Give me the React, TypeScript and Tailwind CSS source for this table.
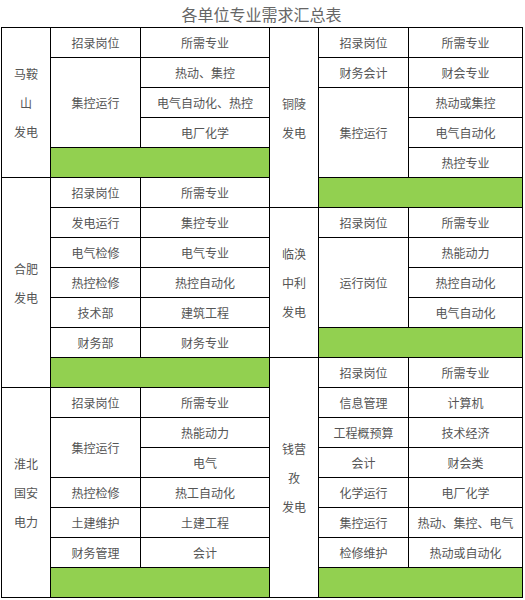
import React from 'react';

type Row = { a?: string; span?: number; b: string } | 'green';
type Block = { unit: string[]; rows: Row[] };

const H = { a: '招录岗位', b: '所需专业' };

const left: Block[] = [
  {
    unit: ['马鞍', '山', '发电'],
    rows: [
      H,
      { a: '集控运行', span: 3, b: '热动、集控' },
      { b: '电气自动化、热控' },
      { b: '电厂化学' },
      'green',
    ],
  },
  {
    unit: ['合肥', '发电'],
    rows: [
      H,
      { a: '发电运行', b: '集控专业' },
      { a: '电气检修', b: '电气专业' },
      { a: '热控检修', b: '热控自动化' },
      { a: '技术部', b: '建筑工程' },
      { a: '财务部', b: '财务专业' },
      'green',
    ],
  },
  {
    unit: ['淮北', '国安', '电力'],
    rows: [
      H,
      { a: '集控运行', span: 2, b: '热能动力' },
      { b: '电气' },
      { a: '热控检修', b: '热工自动化' },
      { a: '土建维护', b: '土建工程' },
      { a: '财务管理', b: '会计' },
      'green',
    ],
  },
];

const right: Block[] = [
  {
    unit: ['铜陵', '发电'],
    rows: [
      H,
      { a: '财务会计', b: '财会专业' },
      { a: '集控运行', span: 3, b: '热动或集控' },
      { b: '电气自动化' },
      { b: '热控专业' },
      'green',
    ],
  },
  {
    unit: ['临涣', '中利', '发电'],
    rows: [
      H,
      { a: '运行岗位', span: 3, b: '热能动力' },
      { b: '热控自动化' },
      { b: '电气自动化' },
      'green',
    ],
  },
  {
    unit: ['钱营', '孜', '发电'],
    rows: [
      H,
      { a: '信息管理', b: '计算机' },
      { a: '工程概预算', b: '技术经济' },
      { a: '会计', b: '财会类' },
      { a: '化学运行', b: '电厂化学' },
      { a: '集控运行', b: '热动、集控、电气' },
      { a: '检修维护', b: '热动或自动化' },
      'green',
    ],
  },
];

function Table({ blocks, w3 }: { blocks: Block[]; w3: string }) {
  return (
    <table className="table-fixed border-collapse">
      <colgroup>
        <col className="w-[49px]" />
        <col className="w-[90px]" />
        <col className={w3} />
      </colgroup>
      <tbody>
        {blocks.map((blk, bi) =>
          blk.rows.map((r, i) => (
            <tr key={`${bi}-${i}`} className="h-[30px]">
              {i === 0 && (
                <td rowSpan={blk.rows.length} className="border border-black text-center align-middle p-0">
                  {blk.unit.map((u, k) => (
                    <div key={k} className="leading-[29px]">
                      {u}
                    </div>
                  ))}
                </td>
              )}
              {r === 'green' ? (
                <td colSpan={2} className="border border-black bg-[#92d050] p-0" />
              ) : (
                <>
                  {r.a !== undefined && (
                    <td rowSpan={r.span} className="border border-black text-center align-middle p-0 whitespace-nowrap">
                      {r.a}
                    </td>
                  )}
                  <td className="border border-black text-center align-middle p-0 whitespace-nowrap">{r.b}</td>
                </>
              )}
            </tr>
          ))
        )}
      </tbody>
    </table>
  );
}

export default function App() {
  return (
    <div
      className="w-[525px] h-[600px] bg-white text-[#555] text-[12px] overflow-hidden"
      style={{ fontFamily: '"Noto Sans CJK SC", "Noto Sans", sans-serif' }}
    >
      <div className="w-[523px] h-[27px] flex items-center justify-center text-[16px] text-[#666] leading-none">
        各单位专业需求汇总表
      </div>
      <div className="flex pl-px">
        <Table blocks={left} w3="w-[129px]" />
        <div className="-ml-px">
          <Table blocks={right} w3="w-[114px]" />
        </div>
      </div>
    </div>
  );
}
